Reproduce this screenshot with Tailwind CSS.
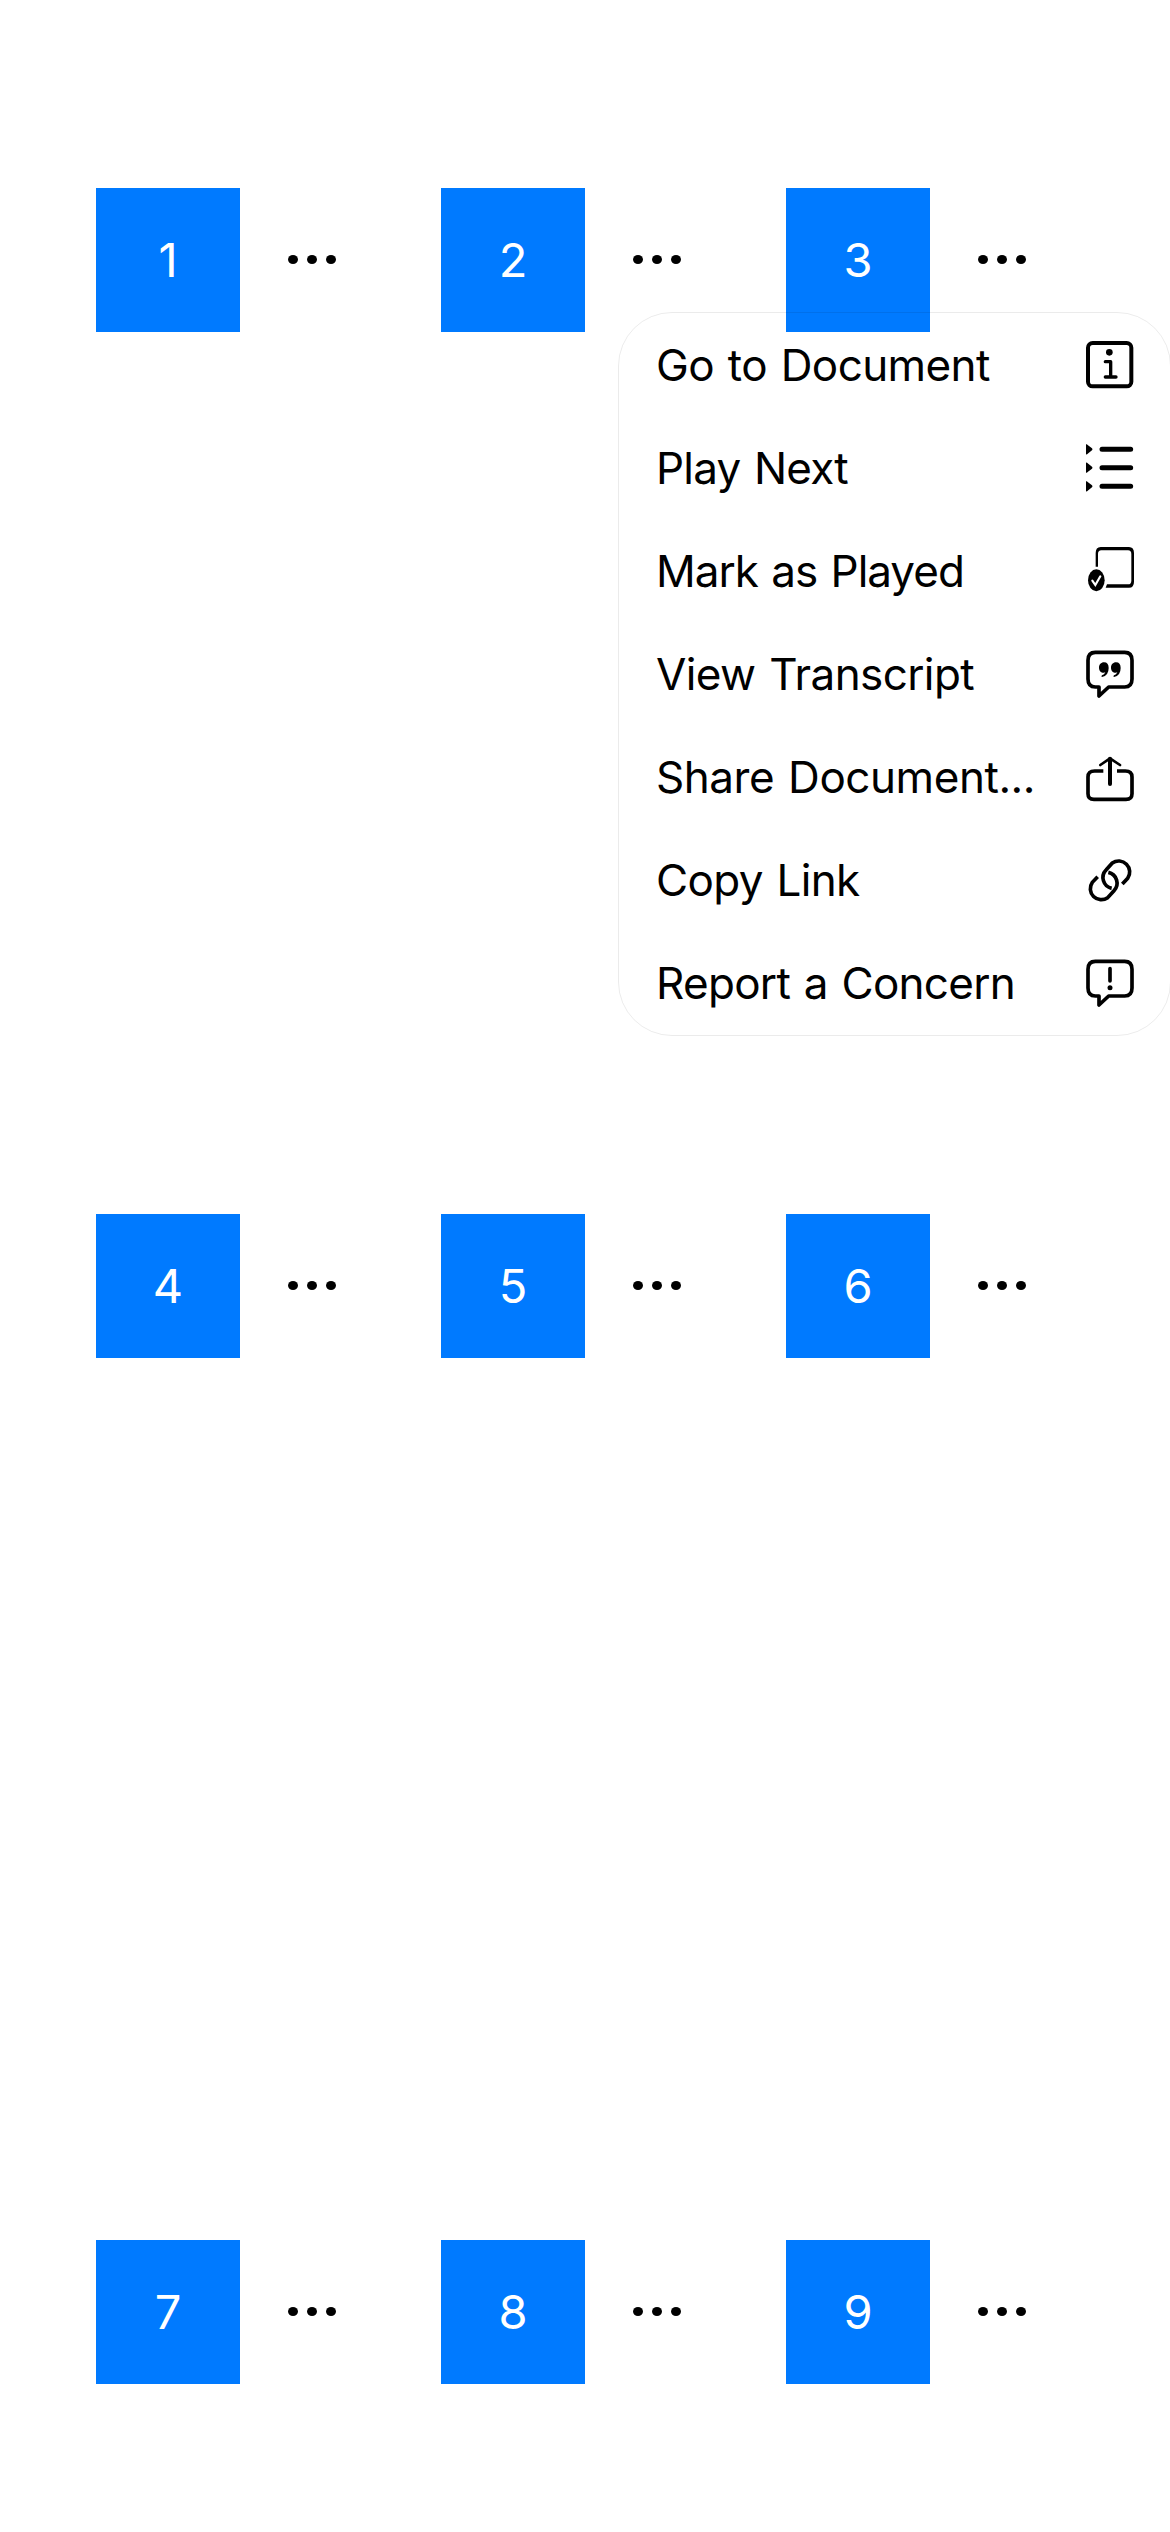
<!DOCTYPE html>
<html lang="en">
<head>
<meta charset="utf-8">
<title>Documents</title>
<script src="https://cdn.jsdelivr.net/npm/@tailwindcss/browser@4"></script>
</head>
<body class="relative h-[2532px] w-[1170px] overflow-hidden bg-white font-[Inter,sans-serif] text-black">
<svg class="hidden">
  <symbol id="dots" viewBox="0 0 48 10"><ellipse cx="5" cy="4.5" rx="5" ry="4.5"/><ellipse cx="24" cy="4.5" rx="5" ry="4.5"/><ellipse cx="43" cy="4.5" rx="5" ry="4.5"/></symbol>
</svg>
<main class="grid grid-cols-[repeat(3,345px)] grid-rows-[repeat(3,144px)] gap-y-[882px] pt-[188px] pl-[96px] text-[47px]">
  <div class="flex items-center gap-12"><div class="flex size-36 items-center justify-center bg-[#007aff] text-white">1</div><svg class="h-[10px] w-12"><use href="#dots"/></svg></div>
  <div class="flex items-center gap-12"><div class="flex size-36 items-center justify-center bg-[#007aff] text-white">2</div><svg class="h-[10px] w-12"><use href="#dots"/></svg></div>
  <div class="flex items-center gap-12"><div class="flex size-36 items-center justify-center bg-[#007aff] text-white">3</div><svg class="h-[10px] w-12"><use href="#dots"/></svg></div>
  <div class="flex items-center gap-12"><div class="flex size-36 items-center justify-center bg-[#007aff] text-white">4</div><svg class="h-[10px] w-12"><use href="#dots"/></svg></div>
  <div class="flex items-center gap-12"><div class="flex size-36 items-center justify-center bg-[#007aff] text-white">5</div><svg class="h-[10px] w-12"><use href="#dots"/></svg></div>
  <div class="flex items-center gap-12"><div class="flex size-36 items-center justify-center bg-[#007aff] text-white">6</div><svg class="h-[10px] w-12"><use href="#dots"/></svg></div>
  <div class="flex items-center gap-12"><div class="flex size-36 items-center justify-center bg-[#007aff] text-white">7</div><svg class="h-[10px] w-12"><use href="#dots"/></svg></div>
  <div class="flex items-center gap-12"><div class="flex size-36 items-center justify-center bg-[#007aff] text-white">8</div><svg class="h-[10px] w-12"><use href="#dots"/></svg></div>
  <div class="flex items-center gap-12"><div class="flex size-36 items-center justify-center bg-[#007aff] text-white">9</div><svg class="h-[10px] w-12"><use href="#dots"/></svg></div>
</main>

<ul class="absolute top-[312px] left-[618px] grid h-[724px] w-[553px] grid-rows-7 rounded-[54px] border border-black/8 pr-[36px] pl-[37px] text-[44px] whitespace-nowrap [word-spacing:2px]">
  <li class="flex items-center justify-between"><span class="tracking-[-0.6px]">Go to Document</span>
    <svg class="size-12 overflow-visible" viewBox="0 0 144 144" fill="none" stroke="#000" stroke-linecap="round" stroke-linejoin="round"><rect x="6" y="6" width="130" height="130" rx="14" stroke-width="12"/><circle cx="70" cy="34" r="10" fill="#000" stroke="none"/><path d="M58 62H74V108M58 108H90" stroke-width="10"/></svg></li>
  <li class="flex items-center justify-between"><span class="tracking-[-0.8px]">Play Next</span>
    <svg class="size-12 overflow-visible" viewBox="0 0 144 144" stroke="#000" stroke-linecap="round" stroke-width="15"><path d="M48 16H134M48 71H134M48 127H134"/><path d="M0 1Q3 0 5 3L18 13Q21 16 18 19L5 29Q3 32 0 31ZM0 56Q3 55 5 58L18 68Q21 71 18 74L5 84Q3 87 0 86ZM0 112Q3 111 5 114L18 124Q21 127 18 130L5 140Q3 143 0 142Z" stroke="none"/></svg></li>
  <li class="flex items-center justify-between"><span class="tracking-[-1px]">Mark as Played</span>
    <svg class="size-12 overflow-visible" viewBox="0 0 144 144"><path fill-rule="evenodd" d="M29 59V18Q29 0 44 0H129Q144 0 144 18V104Q144 122 129 122H59L63 112H126Q136 112 136 101V21Q136 10 126 10H46Q36 10 36 21V59Z"/><ellipse cx="31" cy="100" rx="25" ry="33"/><path d="M19 101L28 114L43 88" fill="none" stroke="#fff" stroke-width="6.5" stroke-linecap="round"/></svg></li>
  <li class="flex items-center justify-between"><span class="tracking-[-0.6px]">View Transcript</span>
    <svg class="size-12 overflow-visible" viewBox="0 0 144 144" fill="none" stroke="#000" stroke-linejoin="round"><path d="M28 7H116Q138 7 138 31V87Q138 111 116 111H68L39 138V111H28Q6 111 6 87V31Q6 7 28 7Z" stroke-width="11"/><path id="comma" fill="#000" stroke="none" d="M54 37C45 37 39 44 39 53C39 62 45 68 53 68Q56 68 58 67Q55 74 48 76Q44 79 48 81Q68 77 68 54Q68 37 54 37Z"/><use href="#comma" x="36"/></svg></li>
  <li class="flex items-center justify-between"><span class="tracking-[-0.45px]">Share Document...</span>
    <svg class="size-12 overflow-visible" viewBox="0 0 144 144" fill="none" stroke="#000"><path d="M52 54H26Q6 54 6 72V122Q6 139 24 139H120Q138 139 138 122V72Q138 54 118 54H93" stroke-width="11"/><path d="M72 17V93" stroke-width="12" stroke-linecap="round"/><path d="M43 36L72 16L102 36" stroke-width="8" stroke-linecap="round" stroke-linejoin="round"/></svg></li>
  <li class="flex items-center justify-between"><span class="tracking-[-0.65px]">Copy Link</span>
    <svg class="size-12 overflow-visible" viewBox="0 0 144 144" fill="none" stroke="#000" stroke-width="11"><path id="loop" d="M109 84L125 67A33 33 0 0 0 79 21L60 42A33 33 0 0 0 77 97"/><use href="#loop" transform="rotate(180 72 73)"/></svg></li>
  <li class="flex items-center justify-between"><span class="tracking-[-0.7px]">Report a Concern</span>
    <svg class="size-12 overflow-visible" viewBox="0 0 144 144" fill="none" stroke="#000" stroke-linejoin="round" stroke-linecap="round"><path d="M28 7H116Q138 7 138 31V87Q138 111 116 111H68L39 138V111H28Q6 111 6 87V31Q6 7 28 7Z" stroke-width="11"/><path d="M72 29V66" stroke-width="11"/><circle cx="72" cy="86" r="7.5" fill="#000" stroke="none"/></svg></li>
</ul>
</body>
</html>
